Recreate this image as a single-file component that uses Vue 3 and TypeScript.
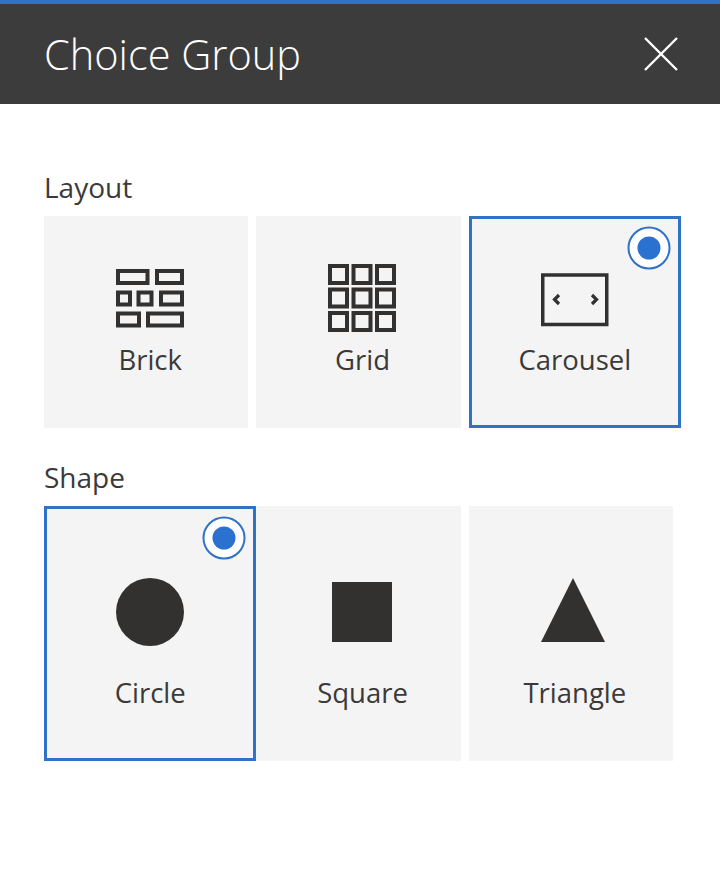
<script setup lang="ts">
type Choice = { label: string; selected?: boolean; icon: string }
const layout: Choice[] = [
  { label: 'Brick', icon: 'brick' },
  { label: 'Grid', icon: 'grid' },
  { label: 'Carousel', icon: 'carousel', selected: true },
]
const shape: Choice[] = [
  { label: 'Circle', icon: 'circle', selected: true },
  { label: 'Square', icon: 'square' },
  { label: 'Triangle', icon: 'triangle' },
]
const groups = [
  { title: 'Layout', size: 'short', items: layout },
  { title: 'Shape', size: 'tall', items: shape },
]
</script>

<template>
  <div class="panel">
    <header class="head">
      <h1 class="title">Choice Group</h1>
      <button class="close" aria-label="Close">
        <svg width="34" height="34" viewBox="0 0 34 34">
          <path d="M1 1 33 33M33 1 1 33" stroke="#fff" stroke-width="2.4" fill="none" />
        </svg>
      </button>
    </header>
    <main class="body">
      <section v-for="g in groups" :key="g.title" class="group">
        <div class="legend">{{ g.title }}</div>
        <div class="row">
          <div
            v-for="c in g.items"
            :key="c.label"
            class="card"
            :class="[g.size, { selected: c.selected }]"
          >
            <svg v-if="c.selected" class="radio" width="44" height="44" viewBox="0 0 44 44">
              <circle cx="22" cy="22" r="20.5" fill="#fff" stroke="#2f72c8" stroke-width="2" />
              <circle cx="22" cy="22" r="11.5" fill="#2b72d0" />
            </svg>
            <svg class="icon" width="68" height="68" viewBox="0 0 68 68">
              <g v-if="c.icon === 'brick'" fill="none" stroke="#323130" stroke-width="4">
                <rect x="2" y="7" width="29.5" height="12" />
                <rect x="41" y="7" width="25" height="12" />
                <rect x="2" y="28.5" width="12" height="12" />
                <rect x="22.5" y="28.5" width="13" height="12" />
                <rect x="45" y="28.5" width="21" height="12" />
                <rect x="2" y="49.5" width="21" height="12" />
                <rect x="32" y="49.5" width="34" height="12" />
              </g>
              <g v-else-if="c.icon === 'grid'" fill="none" stroke="#323130" stroke-width="4">
                <template v-for="y in [2, 25.5, 49]" :key="y">
                  <rect v-for="x in [2, 25.5, 49]" :key="x" :x="x" :y="y" width="17" height="17" />
                </template>
              </g>
              <g v-else-if="c.icon === 'carousel'" fill="none" stroke="#323130">
                <rect x="1.75" y="11" width="64" height="49.5" stroke-width="3.5" />
                <path d="M18 31 13.5 35.5 18 40M51 31 55.5 35.5 51 40" stroke-width="3.2" />
              </g>
              <circle v-else-if="c.icon === 'circle'" cx="34" cy="34" r="34" fill="#323130" />
              <rect v-else-if="c.icon === 'square'" x="4" y="4" width="60" height="60" fill="#323130" />
              <path v-else d="M32 0 64 64H0Z" fill="#323130" />
            </svg>
            <span class="label">{{ c.label }}</span>
          </div>
        </div>
      </section>
    </main>
  </div>
</template>

<style>
html, body { background: #fff; }
</style>

<style scoped>
.panel {
  width: 720px;
  height: 878px;
  background: #fff;
  font-family: "Open Sans", "Noto Sans", sans-serif;
  color: #3b3a39;
  overflow: hidden;
}
.head {
  height: 100px;
  border-top: 4px solid #2f72c8;
  background: #3c3c3c;
  display: flex;
  align-items: center;
  justify-content: space-between;
  padding: 0 42px 0 44px;
}
.title {
  margin: 0;
  font-size: 41.5px;
  font-weight: 300;
  color: #fff;
}
.close {
  border: 0;
  padding: 0;
  background: none;
  display: flex;
}
.body {
  padding: 66px 39px 0 44px;
  display: flex;
  flex-direction: column;
  gap: 32px;
}
.legend {
  font-size: 28px;
  line-height: 34px;
  margin-bottom: 12px;
}
.row { display: flex; }
.card {
  box-sizing: border-box;
  width: 204.33px;
  margin-right: 8px;
  padding-left: 8px;
  background: #f4f4f4;
  display: flex;
  flex-direction: column;
  align-items: center;
  position: relative;
}
.card.selected {
  width: 212.33px;
  margin-right: 0;
  padding-left: 0;
  border: 3px solid #2f72c8;
}
.card.short { height: 212px; padding-top: 48px; }
.card.tall { height: 255px; padding-top: 72px; }
.card.short.selected { padding-top: 45px; }
.card.tall.selected { padding-top: 69px; }
.icon { flex: none; }
.label { font-size: 27.5px; line-height: 36px; }
.short .label { margin-top: 10px; }
.tall .label { margin-top: 29px; }
.radio {
  position: absolute;
  top: 7px;
  right: 7px;
}
</style>
